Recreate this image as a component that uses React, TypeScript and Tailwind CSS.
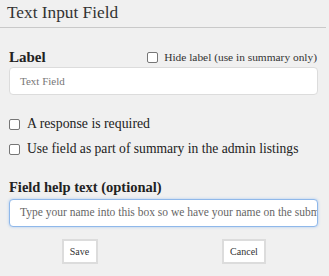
import React from "react";

function Box() {
  return (
    <span className="inline-block w-[11px] h-[11px] border border-[#767676] rounded-[2px] bg-white shrink-0" />
  );
}

export default function App() {
  return (
    <div
      className="w-[329px] h-[276px] bg-[#f0f0f0] text-[#222] overflow-hidden"
      style={{ fontFamily: '"Liberation Serif", "DejaVu Serif", serif' }}
    >
      <div className="pl-[7px] pt-[1px] h-[27px] text-[17.3px] leading-[24px] text-[#333]">Text Input Field</div>
      <div className="h-[1px] w-[326px] bg-[#c9c9c9]" />
      <div className="px-[9px] w-[327px]">
        <div className="flex items-end justify-between mt-[16px] h-[22px]">
          <span className="font-bold text-[15px] leading-[18px]">Label</span>
          <span className="flex items-center gap-[6px] mr-[1px] mb-[2px]">
            <Box />
            <span className="text-[11.4px] leading-[14px] text-[#333]">Hide label (use in summary only)</span>
          </span>
        </div>
        <div className="mt-[1px] h-[28px] rounded-[4px] border border-[#dcdcdc] bg-white flex items-center pl-[10px] text-[11px] text-[#777]">
          Text Field
        </div>
        <div className="mt-[23px] flex items-center gap-[7px] h-[12px] whitespace-nowrap">
          <Box />
          <span className="text-[13.8px] leading-[16px]">A response is required</span>
        </div>
        <div className="mt-[13px] flex items-center gap-[7px] h-[12px] whitespace-nowrap">
          <Box />
          <span className="text-[13.6px] leading-[16px]">Use field as part of summary in the admin listings</span>
        </div>
        <div className="mt-[23px] font-bold text-[14.5px] leading-[18px] whitespace-nowrap">Field help text (optional)</div>
        <div className="mt-[3px] h-[28px] rounded-[4px] border border-[#8fb8ea] shadow-[0_0_3px_#a9c8f0] bg-white flex items-center pl-[10px] pr-[4px] text-[11.5px] text-[#666] overflow-hidden whitespace-nowrap">
          Type your name into this box so we have your name on the submission
        </div>
      </div>
      <div className="grid grid-cols-2 mt-[12px] w-[326px]">
        <div className="flex justify-center">
          <button className="h-[25px] w-[36px] border-2 border-[#dcdcdc] bg-white text-[10px] text-[#333] ml-[-4px]">Save</button>
        </div>
        <div className="flex justify-center">
          <button className="h-[25px] w-[44px] border-2 border-[#dcdcdc] bg-white text-[10px] text-[#333] ml-[-1px]">Cancel</button>
        </div>
      </div>
    </div>
  );
}
